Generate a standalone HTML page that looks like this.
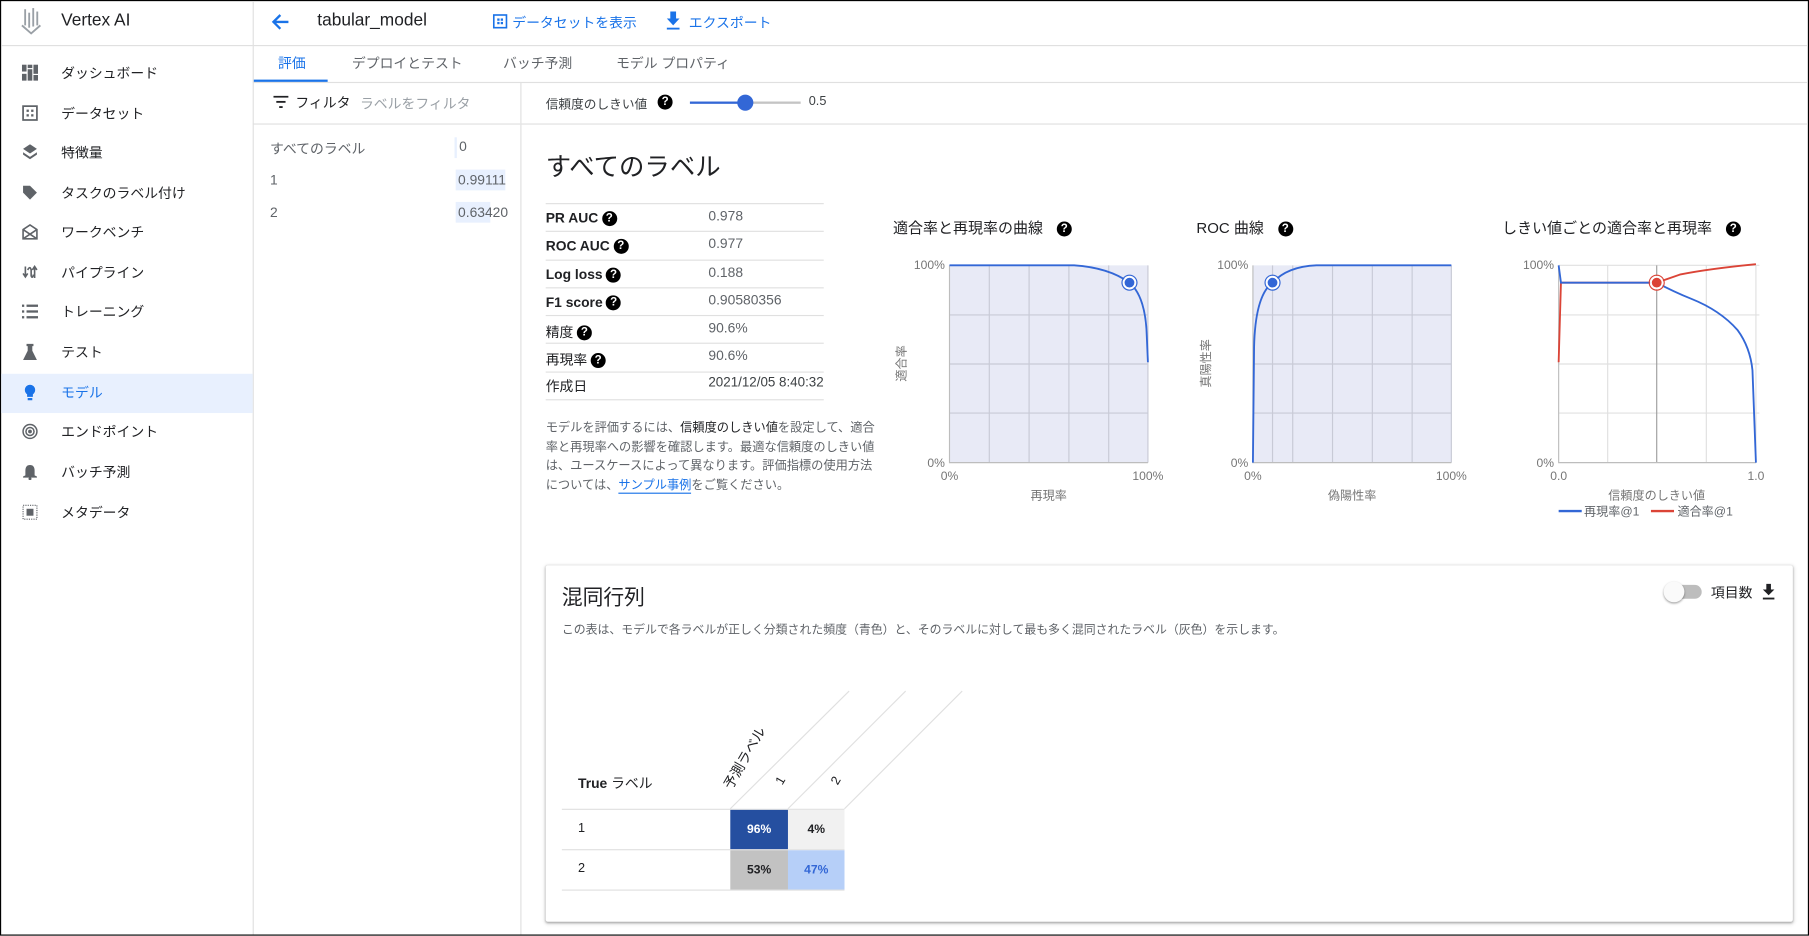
<!DOCTYPE html>
<html><head><meta charset="utf-8">
<style>
*{box-sizing:border-box;margin:0;padding:0}
html,body{width:1809px;height:936px;overflow:hidden;background:#fff}
#w{position:absolute;left:0;top:0;width:1568px;height:811px;transform:scale(1.15370);transform-origin:0 0;font-family:"Liberation Sans","Noto Sans CJK JP",sans-serif;color:#202124;border:1px solid #000;overflow:hidden}
.a{position:absolute;white-space:nowrap}
.nav{position:absolute;left:52px;font-size:12px;color:#202124;transform:translateY(-50%)}
.ic{position:absolute;left:18px;width:14px;height:14px;transform:translateY(-50%)}
.hl{position:absolute;height:1px;background:#e0e0e0}
.vl{position:absolute;width:1px;background:#e0e0e0}
.q{display:inline-block;width:13px;height:13px;border-radius:50%;background:#000;color:#fff;font-size:10px;font-weight:bold;text-align:center;line-height:13px;vertical-align:middle;margin-left:3px}
.mt{position:absolute;left:472px;font-size:12px;font-weight:bold}
.mv{position:absolute;left:613px;font-size:12px;color:#5f6368}
.tab{position:absolute;top:45px;font-size:12px;color:#5f6368}
</style></head><body><div id="w">
<svg class="a" style="left:16px;top:5px" width="20" height="26" viewBox="0 0 20 26"><g fill="#9aa0a6"><rect x="4" y="2" width="1.6" height="14"/><rect x="7.5" y="5" width="1.6" height="13"/><rect x="11" y="1" width="1.6" height="16"/><rect x="14.5" y="4" width="1.6" height="12"/></g><path d="M2 16 L10 23 L18 16" fill="none" stroke="#9aa0a6" stroke-width="1.6"/></svg>
<div class="a" style="left:52px;top:8px;font-size:15px">Vertex AI</div>
<div class="hl" style="left:0;top:38px;width:218px"></div>
<div class="vl" style="left:218px;top:0;height:811px"></div>
<div class="a" style="left:0;top:323px;width:218px;height:34px;background:#e8f0fe"></div>
<svg class="ic" style="top:62px" viewBox="0 0 14 14" fill="#5f6368"><rect x="0" y="0" width="4" height="6"/><rect x="0" y="8" width="4" height="6"/><rect x="5" y="4" width="4" height="10"/><rect x="5" y="0" width="4" height="3"/><rect x="10" y="0" width="4" height="8"/><rect x="10" y="9" width="4" height="5"/></svg>
<div class="nav" style="top:62px">ダッシュボード</div>
<svg class="ic" style="top:97px" viewBox="0 0 14 14" fill="none" stroke="#5f6368" stroke-width="1.5"><rect x="1" y="1" width="12" height="12"/><g fill="#5f6368" stroke="none"><rect x="4" y="4" width="2" height="2"/><rect x="8" y="4" width="2" height="2"/><rect x="4" y="8" width="2" height="2"/><rect x="8" y="8" width="2" height="2"/></g></svg>
<div class="nav" style="top:97px">データセット</div>
<svg class="ic" style="top:131px" viewBox="0 0 14 14" fill="#5f6368"><path d="M7 0 L13 4 L7 8 L1 4Z"/><path d="M1 7 L7 11 L13 7 L13 9 L7 13 L1 9Z"/></svg>
<div class="nav" style="top:131px">特徴量</div>
<svg class="ic" style="top:166px" viewBox="0 0 14 14" fill="#5f6368"><path d="M1 1 H7 L13 7 L7 13 L1 7Z"/></svg>
<div class="nav" style="top:166px">タスクのラベル付け</div>
<svg class="ic" style="top:200px" viewBox="0 0 14 14" fill="none" stroke="#5f6368" stroke-width="1.4"><path d="M1 5 L7 1 L13 5 V13 H1Z M1 5 L13 13 M13 5 L1 13"/></svg>
<div class="nav" style="top:200px">ワークベンチ</div>
<svg class="ic" style="top:235px" viewBox="0 0 14 14" fill="none" stroke="#5f6368" stroke-width="1.4"><path d="M3 2 V10 M1 8 L3 11 L5 8 M5 5 Q7 1 8 5 V10 Q9 13 10 9 M11 12 V3 M9 5 L11 2 L13 5"/></svg>
<div class="nav" style="top:235px">パイプライン</div>
<svg class="ic" style="top:269px" viewBox="0 0 14 14" fill="#5f6368"><rect x="0" y="1" width="2" height="2"/><rect x="4" y="1" width="10" height="2"/><rect x="0" y="6" width="2" height="2"/><rect x="4" y="6" width="10" height="2"/><rect x="0" y="11" width="2" height="2"/><rect x="4" y="11" width="10" height="2"/></svg>
<div class="nav" style="top:269px">トレーニング</div>
<svg class="ic" style="top:304px" viewBox="0 0 14 14" fill="#5f6368"><path d="M4 0 H10 V2 H9 V6 L13 14 H1 L5 6 V2 H4Z"/></svg>
<div class="nav" style="top:304px">テスト</div>
<svg class="ic" style="top:339px" viewBox="0 0 14 14" fill="#1a73e8"><circle cx="7" cy="5" r="4.5"/><rect x="4.5" y="8" width="5" height="3"/><rect x="5" y="12" width="4" height="2"/></svg>
<div class="nav" style="top:339px;color:#1a73e8">モデル</div>
<svg class="ic" style="top:373px" viewBox="0 0 14 14" fill="none" stroke="#5f6368" stroke-width="1.3"><circle cx="7" cy="7" r="6"/><circle cx="7" cy="7" r="3.5"/><circle cx="7" cy="7" r="1" fill="#5f6368"/></svg>
<div class="nav" style="top:373px">エンドポイント</div>
<svg class="ic" style="top:408px" viewBox="0 0 14 14" fill="#5f6368"><path d="M7 1 Q11 1 11 6 V10 L13 11 V12 H1 V11 L3 10 V6 Q3 1 7 1Z"/><circle cx="7" cy="13" r="1.3"/></svg>
<div class="nav" style="top:408px">バッチ予測</div>
<svg class="ic" style="top:443px" viewBox="0 0 14 14" fill="none" stroke="#5f6368" stroke-width="1" stroke-dasharray="1 1"><rect x="1" y="1" width="12" height="12"/><rect x="4" y="4" width="6" height="6" fill="#5f6368" stroke="none"/></svg>
<div class="nav" style="top:443px">メタデータ</div>

<svg class="a" style="left:234px;top:10px" width="16" height="16" viewBox="0 0 16 16" fill="none" stroke="#1a73e8" stroke-width="2"><path d="M15 8 H2 M8 2 L2 8 L8 14"/></svg>
<div class="a" style="left:274px;top:8px;font-size:15px">tabular_model</div>
<svg class="a" style="left:426px;top:11px" width="13" height="13" viewBox="0 0 13 13" fill="none" stroke="#1a73e8" stroke-width="1.4"><rect x="1" y="1" width="11" height="11"/><g fill="#1a73e8" stroke="none"><rect x="4" y="4" width="2" height="2"/><rect x="7" y="4" width="2" height="2"/><rect x="4" y="7" width="2" height="2"/><rect x="7" y="7" width="2" height="2"/></g></svg>
<div class="a" style="left:443px;top:10px;font-size:12px;color:#1a73e8">データセットを表示</div>
<svg class="a" style="left:576px;top:9px" width="13" height="16" viewBox="0 0 13 16" fill="#1a73e8"><path d="M4 0 H9 V6 H12 L6.5 12 L1 6 H4Z"/><rect x="1" y="14" width="11" height="1.6"/></svg>
<div class="a" style="left:596px;top:10px;font-size:12px;color:#1a73e8">エクスポート</div>
<div class="hl" style="left:218px;top:38px;width:1350px"></div>
<div class="tab" style="left:240px;color:#1a73e8">評価</div>
<div class="tab" style="left:304px">デプロイとテスト</div>
<div class="tab" style="left:435px">バッチ予測</div>
<div class="tab" style="left:533px">モデル プロパティ</div>
<div class="a" style="left:219px;top:68px;width:64px;height:2px;background:#1a73e8"></div>
<div class="hl" style="left:218px;top:70px;width:1350px"></div>

<svg class="a" style="left:236px;top:82px" width="13" height="11" viewBox="0 0 13 11" fill="#202124"><rect x="0" y="0" width="13" height="1.6"/><rect x="2.5" y="4.5" width="8" height="1.6"/><rect x="5" y="9" width="3" height="1.6"/></svg>
<div class="a" style="left:255px;top:79px;font-size:12px">フィルタ</div>
<div class="a" style="left:311px;top:80px;font-size:12px;color:#9aa0a6">ラベルをフィルタ</div>
<div class="hl" style="left:218px;top:106px;width:232px"></div>
<div class="a" style="left:233px;top:119px;font-size:12px;color:#5f6368">すべてのラベル</div>
<div class="a" style="left:393px;top:118px;width:2px;height:18px;background:#e8f0fe"></div>
<div class="a" style="left:397px;top:119px;font-size:12px;color:#5f6368">0</div>
<div class="a" style="left:233px;top:148px;font-size:12px;color:#5f6368">1</div>
<div class="a" style="left:394px;top:146px;width:43px;height:18px;background:#e8f0fe"></div>
<div class="a" style="left:396px;top:148px;font-size:12px;color:#5f6368">0.99111</div>
<div class="a" style="left:233px;top:176px;font-size:12px;color:#5f6368">2</div>
<div class="a" style="left:394px;top:174px;width:30px;height:18px;background:#e8f0fe"></div>
<div class="a" style="left:396px;top:176px;font-size:12px;color:#5f6368">0.63420</div>
<div class="vl" style="left:450px;top:70px;height:741px"></div>

<div class="a" style="left:472px;top:81px;font-size:11px;color:#3c4043">信頼度のしきい値</div>
<span class="q a" style="left:566px;top:81px">?</span>
<div class="a" style="left:597px;top:87px;width:48px;height:2px;background:#3367d6"></div>
<div class="a" style="left:645px;top:87px;width:48px;height:2px;background:#c4c4c4"></div>
<div class="a" style="left:638px;top:81px;width:14px;height:14px;border-radius:50%;background:#3367d6"></div>
<div class="a" style="left:700px;top:81px;font-size:11px;color:#3c4043">0.5</div>
<div class="hl" style="left:451px;top:106px;width:1117px"></div>

<div class="a" style="left:472px;top:126px;font-size:22px">すべてのラベル</div>
<div class="hl" style="left:472px;top:175px;width:241px"></div>
<div class="mt" style="top:181px">PR AUC<span class="q">?</span></div><div class="mv" style="top:179px">0.978</div>
<div class="hl" style="left:472px;top:199px;width:241px"></div>
<div class="mt" style="top:205px">ROC AUC<span class="q">?</span></div><div class="mv" style="top:203px">0.977</div>
<div class="hl" style="left:472px;top:224px;width:241px"></div>
<div class="mt" style="top:230px">Log loss<span class="q">?</span></div><div class="mv" style="top:228px">0.188</div>
<div class="hl" style="left:472px;top:248px;width:241px"></div>
<div class="mt" style="top:254px">F1 score<span class="q">?</span></div><div class="mv" style="top:252px">0.90580356</div>
<div class="hl" style="left:472px;top:272px;width:241px"></div>
<div class="mt" style="top:278px;font-weight:normal">精度<span class="q">?</span></div><div class="mv" style="top:276px">90.6%</div>
<div class="hl" style="left:472px;top:296px;width:241px"></div>
<div class="mt" style="top:302px;font-weight:normal">再現率<span class="q">?</span></div><div class="mv" style="top:300px">90.6%</div>
<div class="hl" style="left:472px;top:321px;width:241px"></div>
<div class="mt" style="top:325px;font-weight:normal">作成日</div><div class="mv" style="top:324px;color:#3c4043;font-size:11.6px">2021/12/05 8:40:32</div>
<div class="hl" style="left:472px;top:345px;width:241px"></div>
<div class="a" style="left:472px;top:362px;width:290px;white-space:normal;font-size:10.6px;line-height:16.5px;color:#5f6368">モデルを評価するには、<span style="color:#202124">信頼度のしきい値</span>を設定して、適合率と再現率への影響を確認します。最適な信頼度のしきい値は、ユースケースによって異なります。評価指標の使用方法については、<span style="color:#1a73e8;border-bottom:1px solid #1a73e8">サンプル事例</span>をご覧ください。</div>

<div class="a" style="left:773px;top:186px;font-size:13px">適合率と再現率の曲線<span class="q" style="margin-left:12px">?</span></div>
<div class="a" style="left:1036px;top:186px;font-size:13px">ROC 曲線<span class="q" style="margin-left:12px">?</span></div>
<div class="a" style="left:1301px;top:186px;font-size:13px">しきい値ごとの適合率と再現率<span class="q" style="margin-left:12px">?</span></div>
<svg class="a" style="left:0;top:0" width="1568" height="470" font-family="Liberation Sans, Noto Sans CJK JP, sans-serif" font-size="10.5" fill="#757575">
<g>
<rect x="822" y="229" width="172" height="171" fill="#e8eaf6"/>
<g stroke="#c8cad6" stroke-width="1"><path d="M856.5 229V400M891 229V400M925.5 229V400M960 229V400M994 229V400M822 272H994M822 314.5H994M822 357H994"/></g>
<path d="M822 229 V400 H994" fill="none" stroke="#bdbdbd"/>
<path d="M822 229 L930 229 Q960 231 978 244 Q992 256 993 290 L994 313" fill="none" stroke="#3367d6" stroke-width="1.6"/>
<circle cx="978" cy="244" r="5" fill="#3367d6" stroke="#fff" stroke-width="1.5"/><circle cx="978" cy="244" r="6.5" fill="none" stroke="#3367d6" stroke-width="1"/>
<text x="818" y="232" text-anchor="end">100%</text><text x="818" y="404" text-anchor="end">0%</text>
<text x="822" y="415" text-anchor="middle">0%</text><text x="994" y="415" text-anchor="middle">100%</text>
<text x="908" y="432" text-anchor="middle">再現率</text>
<text transform="translate(784,314) rotate(-90)" text-anchor="middle">適合率</text>
</g>
<g>
<rect x="1085" y="229" width="172" height="171" fill="#e8eaf6"/>
<g stroke="#c8cad6"><path d="M1119.5 229V400M1154 229V400M1188.5 229V400M1223 229V400M1257 229V400M1085 272H1257M1085 314.5H1257M1085 357H1257M1102 229V400"/></g>
<path d="M1085 229 V400 H1257" fill="none" stroke="#bdbdbd"/>
<path d="M1085 400 L1086 300 Q1087 255 1102 244 Q1115 230 1140 229 L1257 229" fill="none" stroke="#3367d6" stroke-width="1.6"/>
<circle cx="1102" cy="244" r="5" fill="#3367d6" stroke="#fff" stroke-width="1.5"/><circle cx="1102" cy="244" r="6.5" fill="none" stroke="#3367d6"/>
<text x="1081" y="232" text-anchor="end">100%</text><text x="1081" y="404" text-anchor="end">0%</text>
<text x="1085" y="415" text-anchor="middle">0%</text><text x="1257" y="415" text-anchor="middle">100%</text>
<text x="1171" y="432" text-anchor="middle">偽陽性率</text>
<text transform="translate(1048,314) rotate(-90)" text-anchor="middle">真陽性率</text>
</g>
<g>
<g stroke="#e0e0e0"><path d="M1392.5 229V400M1478 229V400M1521 229V400M1350 272H1524M1350 314.5H1524M1350 357H1524M1350 229H1524"/></g>
<path d="M1435 229V400" stroke="#9e9e9e"/>
<path d="M1350 229 V400 H1521" fill="none" stroke="#bdbdbd"/>
<path d="M1350 313 L1352 244 L1435 244 L1455 237 Q1480 232 1521 228" fill="none" stroke="#db4437" stroke-width="1.6"/>
<path d="M1350 229 L1352 244 L1435 244 Q1450 252 1465 258 Q1490 268 1505 285 Q1516 300 1518 320 L1521 400" fill="none" stroke="#3367d6" stroke-width="1.6"/>
<circle cx="1435" cy="244" r="5" fill="#db4437" stroke="#fff" stroke-width="1.5"/><circle cx="1435" cy="244" r="6.5" fill="none" stroke="#db4437"/>
<text x="1346" y="232" text-anchor="end">100%</text><text x="1346" y="404" text-anchor="end">0%</text>
<text x="1350" y="415" text-anchor="middle">0.0</text><text x="1521" y="415" text-anchor="middle">1.0</text>
<text x="1435" y="432" text-anchor="middle">信頼度のしきい値</text>
<path d="M1350 442H1370" stroke="#3367d6" stroke-width="2"/><text x="1372" y="446" fill="#5f6368">再現率@1</text>
<path d="M1430 442H1450" stroke="#db4437" stroke-width="2"/><text x="1453" y="446" fill="#5f6368">適合率@1</text>
</g>
</svg>

<div class="a" style="left:472px;top:489px;width:1081px;height:309px;background:#fff;box-shadow:0 1px 2px rgba(0,0,0,0.3),0 1px 3px 1px rgba(0,0,0,0.1);border-radius:2px"></div>
<div class="a" style="left:486px;top:503px;font-size:18px">混同行列</div>
<div class="a" style="left:1446px;top:506px;width:28px;height:12px;border-radius:6px;background:#bdbdbd"></div>
<div class="a" style="left:1441px;top:503px;width:18px;height:18px;border-radius:50%;background:#fafafa;box-shadow:0 1px 2px rgba(0,0,0,0.4)"></div>
<div class="a" style="left:1482px;top:504px;font-size:12px">項目数</div>
<svg class="a" style="left:1526px;top:505px" width="12" height="14" viewBox="0 0 12 14" fill="#202124"><path d="M4 0 H8 V5 H11 L6 10 L1 5 H4Z"/><rect x="1" y="12" width="10" height="1.6"/></svg>
<div class="a" style="left:486px;top:536px;font-size:10.3px;color:#5f6368">この表は、モデルで各ラベルが正しく分類された頻度（青色）と、そのラベルに対して最も多く混同されたラベル（灰色）を示します。</div>
<svg class="a" style="left:0;top:0" width="1568" height="811" font-family="Liberation Sans, Noto Sans CJK JP, sans-serif">
<g stroke="#e0e0e0"><path d="M632 700 L735 598 M682 700 L784 598 M731 700 L833 598"/></g>
<text transform="translate(633,684) rotate(-60)" font-size="12" fill="#202124">予測ラベル</text>
<text transform="translate(677,680) rotate(-60)" font-size="11" fill="#202124">1</text>
<text transform="translate(725,680) rotate(-60)" font-size="11" fill="#202124">2</text>
</svg>
<div class="a" style="left:500px;top:669px;font-size:12px"><b>True</b> ラベル</div>
<div class="hl" style="left:486px;top:700px;width:245px"></div>
<div class="hl" style="left:486px;top:735px;width:245px"></div>
<div class="hl" style="left:486px;top:770px;width:245px"></div>
<div class="a" style="left:500px;top:711px;font-size:11px">1</div>
<div class="a" style="left:500px;top:746px;font-size:11px">2</div>
<div class="a" style="left:632px;top:701px;width:50px;height:34px;background:#254fa0;color:#fff;font-size:10.5px;font-weight:bold;text-align:center;line-height:34px">96%</div>
<div class="a" style="left:682px;top:701px;width:49px;height:34px;background:#f1f1f1;font-size:10.5px;font-weight:bold;text-align:center;line-height:34px">4%</div>
<div class="a" style="left:632px;top:736px;width:50px;height:34px;background:#c2c2c2;font-size:10.5px;font-weight:bold;text-align:center;line-height:34px">53%</div>
<div class="a" style="left:682px;top:736px;width:49px;height:34px;background:#b6cff8;color:#3367d6;font-size:10.5px;font-weight:bold;text-align:center;line-height:34px">47%</div>
</div></body></html>
